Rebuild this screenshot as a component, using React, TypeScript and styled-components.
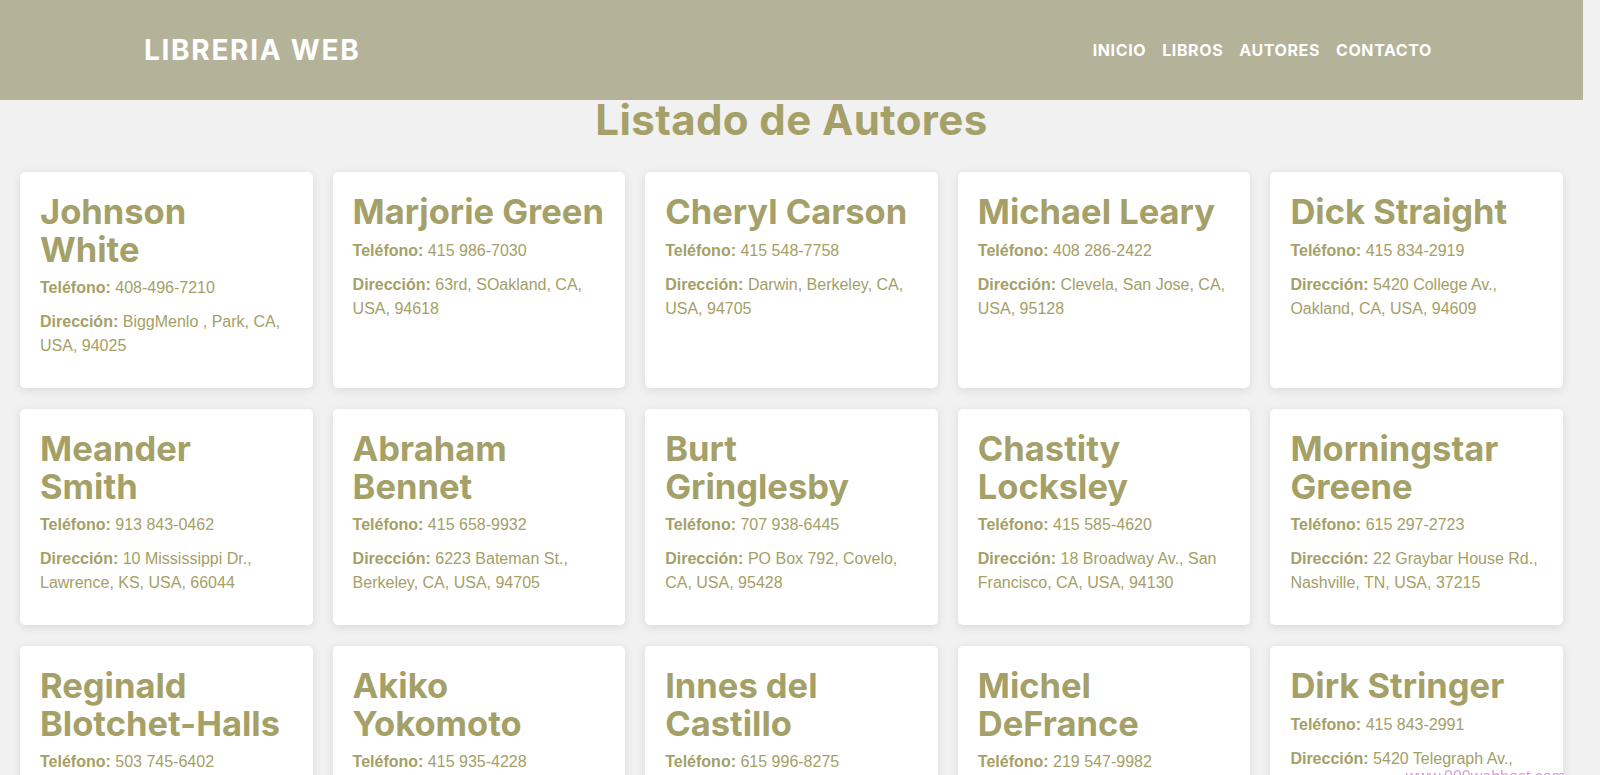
import React from "react";
import styled, { createGlobalStyle } from "styled-components";

const GlobalStyle = createGlobalStyle`
  html { overflow: hidden; }
  body {
    margin: 0;
    padding-right: 17px;
    background: #f1f1f1;
    font-family: "Liberation Sans", Arial, sans-serif;
  }
  * { box-sizing: border-box; }
`;

const olive = "#a4a067";

const Header = styled.header`
  height: 100px;
  background: #b5b29a;
  display: flex;
  align-items: center;
  justify-content: space-between;
  padding: 0 151px 0 144px;
`;

const Logo = styled.div`
  font-family: Inter, "Noto Sans", sans-serif;
  font-weight: 700;
  font-size: 28px;
  letter-spacing: 1.7px;
  color: #ffffff;
`;

const Nav = styled.nav`
  display: flex;
  gap: 16px;
`;

const NavLink = styled.a`
  font-family: Inter, "Noto Sans", sans-serif;
  font-weight: 700;
  font-size: 16px;
  letter-spacing: 0.6px;
  color: #ffffff;
  text-decoration: none;
  text-transform: uppercase;
`;

const Title = styled.h1`
  margin: 0;
  text-align: center;
  font-family: Inter, "Noto Sans", sans-serif;
  font-weight: 700;
  font-size: 42px;
  letter-spacing: 0.4px;
  line-height: 40px;
  color: ${olive};
`;

const Grid = styled.main`
  display: grid;
  grid-template-columns: repeat(5, 1fr);
  gap: 21px 20px;
  padding: 32px 20px 40px;
`;

const Card = styled.article`
  background: #ffffff;
  border-radius: 5px;
  padding: 20px;
  box-shadow: 0 2px 10px rgba(0, 0, 0, 0.1);
`;

const Name = styled.h2`
  margin: 0 0 -2px;
  padding-top: 1px;
  font-family: Inter, "Noto Sans", sans-serif;
  font-weight: 700;
  font-size: 34.5px;
  line-height: 37.5px;
  color: ${olive};
`;

const Info = styled.p`
  margin: 10px 0;
  font-size: 16px;
  line-height: 24px;
  color: ${olive};
`;

const Label = styled.strong`
  font-weight: 700;
`;

const Watermark = styled.a`
  position: fixed;
  right: 35px;
  bottom: -11px;
  font-family: "Liberation Sans", Arial, sans-serif;
  font-size: 16px;
  color: #d79ad7;
  text-decoration: none;
`;

type Author = { name: string; phone: string; address: string };

const authors: Author[] = [
  { name: "Johnson White", phone: "408-496-7210", address: "BiggMenlo , Park, CA, USA, 94025" },
  { name: "Marjorie Green", phone: "415 986-7030", address: "63rd, SOakland, CA, USA, 94618" },
  { name: "Cheryl Carson", phone: "415 548-7758", address: "Darwin, Berkeley, CA, USA, 94705" },
  { name: "Michael Leary", phone: "408 286-2422", address: "Clevela, San Jose, CA, USA, 95128" },
  { name: "Dick Straight", phone: "415 834-2919", address: "5420 College Av., Oakland, CA, USA, 94609" },
  { name: "Meander Smith", phone: "913 843-0462", address: "10 Mississippi Dr., Lawrence, KS, USA, 66044" },
  { name: "Abraham Bennet", phone: "415 658-9932", address: "6223 Bateman St., Berkeley, CA, USA, 94705" },
  { name: "Burt Gringlesby", phone: "707 938-6445", address: "PO Box 792, Covelo, CA, USA, 95428" },
  { name: "Chastity Locksley", phone: "415 585-4620", address: "18 Broadway Av., San Francisco, CA, USA, 94130" },
  { name: "Morningstar Greene", phone: "615 297-2723", address: "22 Graybar House Rd., Nashville, TN, USA, 37215" },
  { name: "Reginald Blotchet-Halls", phone: "503 745-6402", address: "55 Hillsdale Bl., Corvallis, OR, USA, 97330" },
  { name: "Akiko Yokomoto", phone: "415 935-4228", address: "3 Silver Ct., Walnut Creek, CA, USA, 94595" },
  { name: "Innes del Castillo", phone: "615 996-8275", address: "2286 Cram Pl. #86, Ann Arbor, MI, USA, 48105" },
  { name: "Michel DeFrance", phone: "219 547-9982", address: "3 Balding Pl., Gary, IN, USA, 46403" },
  { name: "Dirk Stringer", phone: "415 843-2991", address: "5420 Telegraph Av., Oakland, CA, USA, 94609" },
];

export default function App() {
  return (
    <>
      <GlobalStyle />
      <Header>
        <Logo>LIBRERIA WEB</Logo>
        <Nav>
          <NavLink href="#">Inicio</NavLink>
          <NavLink href="#">Libros</NavLink>
          <NavLink href="#">Autores</NavLink>
          <NavLink href="#">Contacto</NavLink>
        </Nav>
      </Header>
      <Title>Listado de Autores</Title>
      <Grid>
        {authors.map((a) => (
          <Card key={a.name}>
            <Name>{a.name}</Name>
            <Info>
              <Label>Teléfono:</Label> {a.phone}
            </Info>
            <Info>
              <Label>Dirección:</Label> {a.address}
            </Info>
          </Card>
        ))}
      </Grid>
      <Watermark href="#">www.000webhost.com</Watermark>
    </>
  );
}
